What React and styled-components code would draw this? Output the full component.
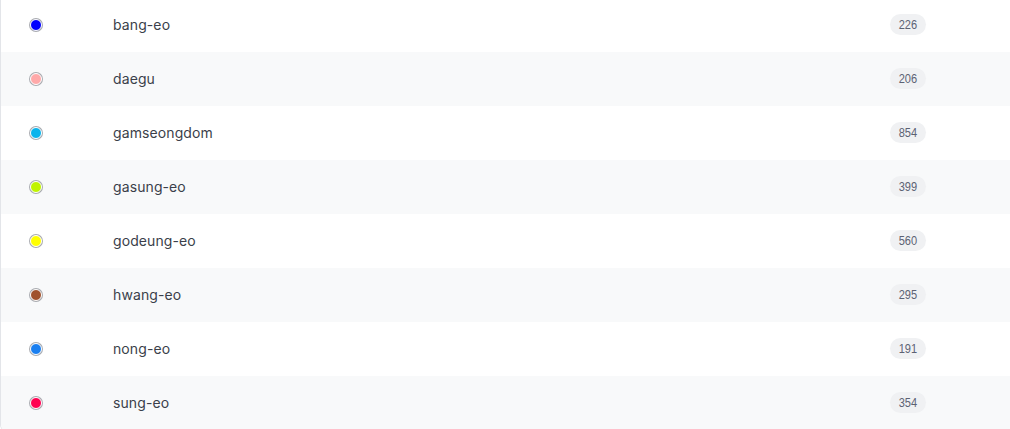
import React from 'react';
import styled, { createGlobalStyle } from 'styled-components';

const GlobalStyle = createGlobalStyle`
  html, body {
    margin: 0;
    padding: 0;
    background: #fff;
    overflow: hidden;
  }
`;

const Table = styled.div`
  margin-top: -2px;
  border-left: 1px solid #e3e5e9;
  border-bottom: 1px solid #eceef1;
  border-bottom-left-radius: 6px;
  overflow: hidden;
  font-family: Inter, "Liberation Sans", sans-serif;
`;

const Row = styled.div`
  display: grid;
  grid-template-columns: 112px 1fr 120px;
  align-items: center;
  height: 54px;
  background: ${(p) => (p.$striped ? '#f8f9fa' : '#fff')};
`;

const DotCell = styled.div`
  padding-left: 29px;
  display: flex;
  align-items: center;
`;

const Dot = styled.span`
  width: 10px;
  height: 10px;
  border-radius: 50%;
  background: ${(p) => p.$color};
  border: 1px solid #fff;
  box-shadow: 0 0 0 1px #a9abb0;
`;

const Name = styled.div`
  font-size: 14px;
  color: #3b3f4a;
  letter-spacing: 0.1px;
  padding-bottom: 2px;
`;

const Count = styled.span`
  justify-self: start;
  display: inline-flex;
  align-items: center;
  justify-content: center;
  width: 36px;
  height: 21px;
  margin-bottom: 2px;
  border-radius: 11px;
  background: #f0f1f3;
  color: #5c6273;
  font-family: "Liberation Sans", sans-serif;
  font-size: 13px;
`;

const Digits = styled.span`
  display: inline-block;
  transform: scaleX(0.85);
`;

const rows = [
  { name: 'bang-eo', color: '#0000ff', count: 226 },
  { name: 'daegu', color: '#ffa9a9', count: 206 },
  { name: 'gamseongdom', color: '#0bb4ec', count: 854 },
  { name: 'gasung-eo', color: '#c0f400', count: 399 },
  { name: 'godeung-eo', color: '#ffff00', count: 560 },
  { name: 'hwang-eo', color: '#a0522d', count: 295 },
  { name: 'nong-eo', color: '#1a7ff0', count: 191 },
  { name: 'sung-eo', color: '#ff0050', count: 354 },
];

const App = () => (
  <>
    <GlobalStyle />
    <Table>
      {rows.map((r, i) => (
        <Row key={r.name} $striped={i % 2 === 1}>
          <DotCell>
            <Dot $color={r.color} />
          </DotCell>
          <Name>{r.name}</Name>
          <Count>
            <Digits>{r.count}</Digits>
          </Count>
        </Row>
      ))}
    </Table>
  </>
);

export default App;
